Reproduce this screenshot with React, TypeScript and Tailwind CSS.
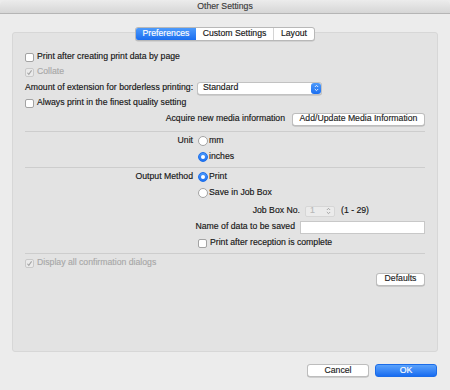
const font = "font-['Liberation_Sans',Arial,sans-serif]";

function Check({ checked, disabled }: { checked?: boolean; disabled?: boolean }) {
  return (
    <span
      className={`flex h-[9px] w-[9px] shrink-0 items-center justify-center rounded-[2px] border ${
        disabled ? "border-[#c9c9c9] bg-[#eaeaea]" : "border-[#a3a3a3] bg-white"
      }`}
    >
      {checked && (
        <svg viewBox="0 0 8 8" className="h-[7px] w-[7px]">
          <path d="M1.6 4.3 L3.2 6.1 L6.4 1.6" fill="none" stroke={disabled ? "#a3a3a3" : "#222"} strokeWidth="1.2" />
        </svg>
      )}
    </span>
  );
}

function Radio({ on }: { on?: boolean }) {
  if (on)
    return (
      <span className="flex h-[10px] w-[10px] shrink-0 items-center justify-center rounded-full border border-[#1d6fea] bg-gradient-to-b from-[#4a98fb] to-[#1f72f1]">
        <span className="h-[4px] w-[4px] rounded-full bg-white" />
      </span>
    );
  return <span className="h-[10px] w-[10px] shrink-0 rounded-full border border-[#a3a3a3] bg-white" />;
}

function Button({ children, w, primary }: { children: string; w: string; primary?: boolean }) {
  return (
    <span
      className={`flex h-[13px] items-center justify-center whitespace-nowrap rounded-[3px] border ${w} ${
        primary
          ? "border-[#1b6ce8] bg-gradient-to-b from-[#5aa2fb] to-[#176cf0] text-white"
          : "border-[#bdbdbd] bg-white text-[#1c1c1c] shadow-[0_0.5px_0_#b0b0b0]"
      }`}
    >
      {children}
    </span>
  );
}

function CheckRow({ label, checked, disabled, h }: { label: string; checked?: boolean; disabled?: boolean; h: string }) {
  return (
    <div className={`flex items-center gap-[3px] ${h}`}>
      <Check checked={checked} disabled={disabled} />
      <span className={disabled ? "text-[#a8a8a8]" : ""}>{label}</span>
    </div>
  );
}

function Separator({ mt }: { mt: string }) {
  return <div className={`h-px bg-[#cdcdcd] ${mt}`} />;
}

export default function App() {
  return (
    <div
      className={`flex h-[390px] w-[450px] flex-col whitespace-nowrap bg-[#ececec] text-[8.7px] text-[#161616] [-webkit-text-stroke:0.15px] ${font}`}
    >
      {/* title bar */}
      <div className="flex h-[14px] shrink-0 items-center justify-center rounded-t-[5px] border-b border-[#b5b5b5] bg-gradient-to-b from-[#ececec] to-[#d6d6d6] text-[#3a3a3a]">
        Other Settings
      </div>

      {/* tabs */}
      <div className="relative z-10 mt-[13px] -mb-[9px] flex justify-center">
        <div className="flex h-[14px] overflow-hidden rounded-[3px] border border-[#b8b8b8] bg-white shadow-[0_0.5px_0_#c0c0c0]">
          <span className="flex w-[60px] items-center justify-center bg-gradient-to-b from-[#4d9afb] to-[#1a6ef0] text-white">
            Preferences
          </span>
          <span className="flex w-[78px] items-center justify-center border-r border-[#d4d4d4]">Custom Settings</span>
          <span className="flex w-[40px] items-center justify-center">Layout</span>
        </div>
      </div>

      {/* panel */}
      <div className="mx-[12px] flex h-[320px] flex-col rounded-[3px] border border-[#d7d7d7] bg-[#e3e3e3] px-[12px] pt-[16px]">
        <CheckRow label="Print after creating print data by page" h="h-[16px]" />
        <CheckRow label="Collate" checked disabled h="h-[14px]" />
        <div className="flex h-[18px] items-center">
          <span className="w-[172px]">Amount of extension for borderless printing:</span>
          <span className="flex h-[13px] w-[125px] items-center justify-between rounded-[3px] border border-[#c2c2c2] bg-white pl-[5px] shadow-[0_0.5px_0_#b5b5b5]">
            Standard
            <span className="flex h-full w-[10px] flex-col items-center justify-center rounded-[3px] bg-gradient-to-b from-[#4d9afb] to-[#1a6ef0]">
              <svg viewBox="0 0 6 9" className="h-[8px] w-[5px]">
                <path d="M1 3.3 L3 1.3 L5 3.3 M1 5.7 L3 7.7 L5 5.7" fill="none" stroke="white" strokeWidth="1" />
              </svg>
            </span>
          </span>
        </div>
        <CheckRow label="Always print in the finest quality setting" h="h-[12px]" />
        <div className="flex h-[20px] items-center justify-end gap-[7px]">
          <span>Acquire new media information</span>
          <Button w="w-[133px]">Add/Update Media Information</Button>
        </div>

        <Separator mt="mt-[2px]" />

        <div className="flex h-[18px] items-center">
          <span className="w-[168px] text-right">Unit</span>
          <span className="ml-[5px] flex items-center gap-[1px]">
            <Radio />
            <span>mm</span>
          </span>
        </div>
        <div className="flex h-[14px] items-center pl-[173px]">
          <span className="flex items-center gap-[1px]">
            <Radio on />
            <span>inches</span>
          </span>
        </div>

        <Separator mt="mt-[3px]" />

        <div className="flex h-[18px] items-center">
          <span className="w-[168px] text-right">Output Method</span>
          <span className="ml-[5px] flex items-center gap-[1px]">
            <Radio on />
            <span>Print</span>
          </span>
        </div>
        <div className="flex h-[14px] items-center pl-[173px]">
          <span className="flex items-center gap-[1px]">
            <Radio />
            <span>Save in Job Box</span>
          </span>
        </div>

        <div className="mt-[3px] flex h-[16px] items-center">
          <span className="w-[275px] text-right">Job Box No.</span>
          <span className="ml-[5px] flex h-[11px] w-[30px] items-center justify-between rounded-[2px] border border-[#d6d6d6] bg-[#ebebeb] pl-[4px] pr-[3px] text-[#b8b8b8]">
            1
            <svg viewBox="0 0 6 9" className="h-[8px] w-[5px]">
              <path d="M1 3.3 L3 1.3 L5 3.3 M1 5.7 L3 7.7 L5 5.7" fill="none" stroke="#8e8e8e" strokeWidth="0.9" />
            </svg>
          </span>
          <span className="ml-[6px]">(1 - 29)</span>
        </div>
        <div className="flex h-[16px] items-center">
          <span className="w-[275px] text-right">Name of data to be saved</span>
          <span className="ml-[5px] h-[13px] w-[125px] shrink-0 border border-[#c8c8c8] bg-white" />
        </div>
        <div className="flex h-[16px] items-center gap-[3px] pl-[173px]">
          <Check />
          <span>Print after reception is complete</span>
        </div>

        <Separator mt="mt-[2px]" />

        <CheckRow label="Display all confirmation dialogs" checked disabled h="h-[18px]" />
        <div className="flex h-[14px] items-center justify-end">
          <Button w="w-[49px]">Defaults</Button>
        </div>
      </div>

      {/* footer buttons */}
      <div className="mt-[12px] flex justify-end gap-[6px] pr-[13px]">
        <Button w="w-[62px]">Cancel</Button>
        <Button w="w-[62px]" primary>
          OK
        </Button>
      </div>
    </div>
  );
}
